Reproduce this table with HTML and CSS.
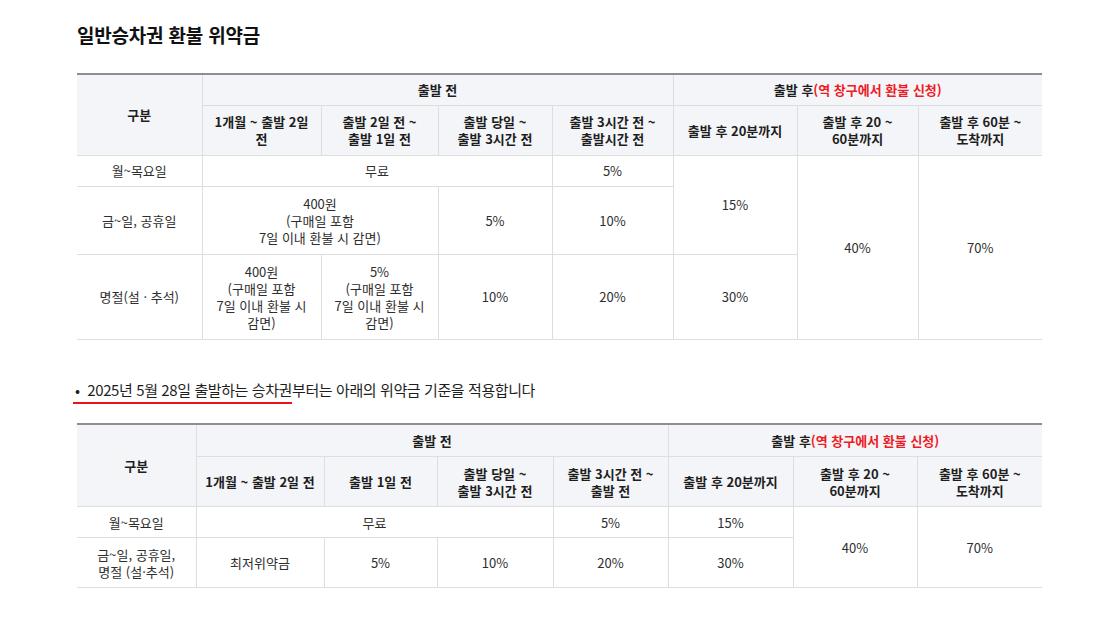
FILE: index.html
```html
<!DOCTYPE html>
<html lang="ko">
<head>
<meta charset="utf-8">
<link rel="stylesheet" href="styles.css">
</head>
<body>
<div class="page">
  <h2 class="title">일반승차권 환불 위약금</h2>

  <table class="fee fee-1">
    <colgroup>
      <col style="width:125px"><col style="width:119px"><col style="width:117px"><col style="width:114px">
      <col style="width:121px"><col style="width:124px"><col style="width:121px"><col style="width:124px">
    </colgroup>
    <thead>
      <tr class="h1">
        <th rowspan="2">구분</th>
        <th colspan="4">출발 전</th>
        <th colspan="3">출발 후<span class="red">(역 창구에서 환불 신청)</span></th>
      </tr>
      <tr class="h2">
        <th>1개월 ~ 출발 2일<br>전</th>
        <th>출발 2일 전 ~<br>출발 1일 전</th>
        <th>출발 당일 ~<br>출발 3시간 전</th>
        <th>출발 3시간 전 ~<br>출발시간 전</th>
        <th>출발 후 20분까지</th>
        <th>출발 후 20 ~<br>60분까지</th>
        <th>출발 후 60분 ~<br>도착까지</th>
      </tr>
    </thead>
    <tbody>
      <tr class="r1">
        <td>월~목요일</td>
        <td colspan="3">무료</td>
        <td>5%</td>
        <td rowspan="2">15%</td>
        <td rowspan="3">40%</td>
        <td rowspan="3">70%</td>
      </tr>
      <tr class="r2">
        <td>금~일, 공휴일</td>
        <td colspan="2">400원<br>(구매일 포함<br>7일 이내 환불 시 감면)</td>
        <td>5%</td>
        <td>10%</td>
      </tr>
      <tr class="r3">
        <td>명절(설 · 추석)</td>
        <td>400원<br>(구매일 포함<br>7일 이내 환불 시<br>감면)</td>
        <td>5%<br>(구매일 포함<br>7일 이내 환불 시<br>감면)</td>
        <td>10%</td>
        <td>20%</td>
        <td>30%</td>
      </tr>
    </tbody>
  </table>

  <p class="notice"><span class="mark">• &nbsp;2025년 5월 28일 출발하는 승차권</span>부터는 아래의 위약금 기준을 적용합니다</p>

  <table class="fee fee-2">
    <colgroup>
      <col style="width:119px"><col style="width:128px"><col style="width:113px"><col style="width:116px">
      <col style="width:115px"><col style="width:125px"><col style="width:124px"><col style="width:125px">
    </colgroup>
    <thead>
      <tr class="h1">
        <th rowspan="2">구분</th>
        <th colspan="4">출발 전</th>
        <th colspan="3">출발 후<span class="red">(역 창구에서 환불 신청)</span></th>
      </tr>
      <tr class="h2">
        <th>1개월 ~ 출발 2일 전</th>
        <th>출발 1일 전</th>
        <th>출발 당일 ~<br>출발 3시간 전</th>
        <th>출발 3시간 전 ~<br>출발 전</th>
        <th>출발 후 20분까지</th>
        <th>출발 후 20 ~<br>60분까지</th>
        <th>출발 후 60분 ~<br>도착까지</th>
      </tr>
    </thead>
    <tbody>
      <tr class="r1">
        <td>월~목요일</td>
        <td colspan="3">무료</td>
        <td>5%</td>
        <td>15%</td>
        <td rowspan="2">40%</td>
        <td rowspan="2">70%</td>
      </tr>
      <tr class="r4">
        <td>금~일, 공휴일,<br>명절 (설·추석)</td>
        <td>최저위약금</td>
        <td>5%</td>
        <td>10%</td>
        <td>20%</td>
        <td>30%</td>
      </tr>
    </tbody>
  </table>
</div>
</body>
</html>
```

FILE: styles.css
```css
html, body {
  margin: 0;
  padding: 0;
  background: #ffffff;
}

body {
  font-family: "Malgun Gothic", "Noto Sans CJK KR", "Noto Sans", sans-serif;
  color: #333333;
}

.page {
  padding: 23px 64px 0 77px;
}

.title {
  margin: 0;
  font-size: 19px;
  line-height: 24px;
  font-weight: 700;
  letter-spacing: -0.2px;
  color: #111111;
}

.fee {
  border-collapse: collapse;
  table-layout: fixed;
  width: 965px;
  border-top: 2px solid #8e8e8e;
  font-size: 13px;
  letter-spacing: 0;
}

.fee-1 {
  margin-top: 26px;
}

.fee-2 {
  margin-top: 19px;
}

.fee th,
.fee td {
  border: 1px solid #dedede;
  text-align: center;
  vertical-align: middle;
  padding: 0 4px;
  line-height: 17px;
}

.fee th {
  background: #f4f5f8;
  font-weight: 700;
  color: #1e1e1e;
}

.fee td {
  color: #2e2e2e;
}

.fee tr > :first-child {
  border-left: none;
}

.fee tr > :last-child {
  border-right: none;
}

.fee-1 .h1 { height: 31px; }
.fee-2 .h1 { height: 33px; }
.fee .h2 { height: 50px; }
.fee-1 .r1 { height: 31px; }
.fee-2 .r1 { height: 31px; }
.fee .r2 { height: 68px; }
.fee .r3 { height: 85px; }
.fee .r4 { height: 50px; }

.red {
  color: #ee1c25;
}

.notice {
  margin: 40px 0 0 -4px;
  font-size: 15px;
  line-height: 20px;
  letter-spacing: -0.4px;
  color: #1e1e1e;
}

.mark {
  display: inline-block;
  padding: 0 0 2px 2px;
  border-bottom: 2px solid #e8141c;
}
```
